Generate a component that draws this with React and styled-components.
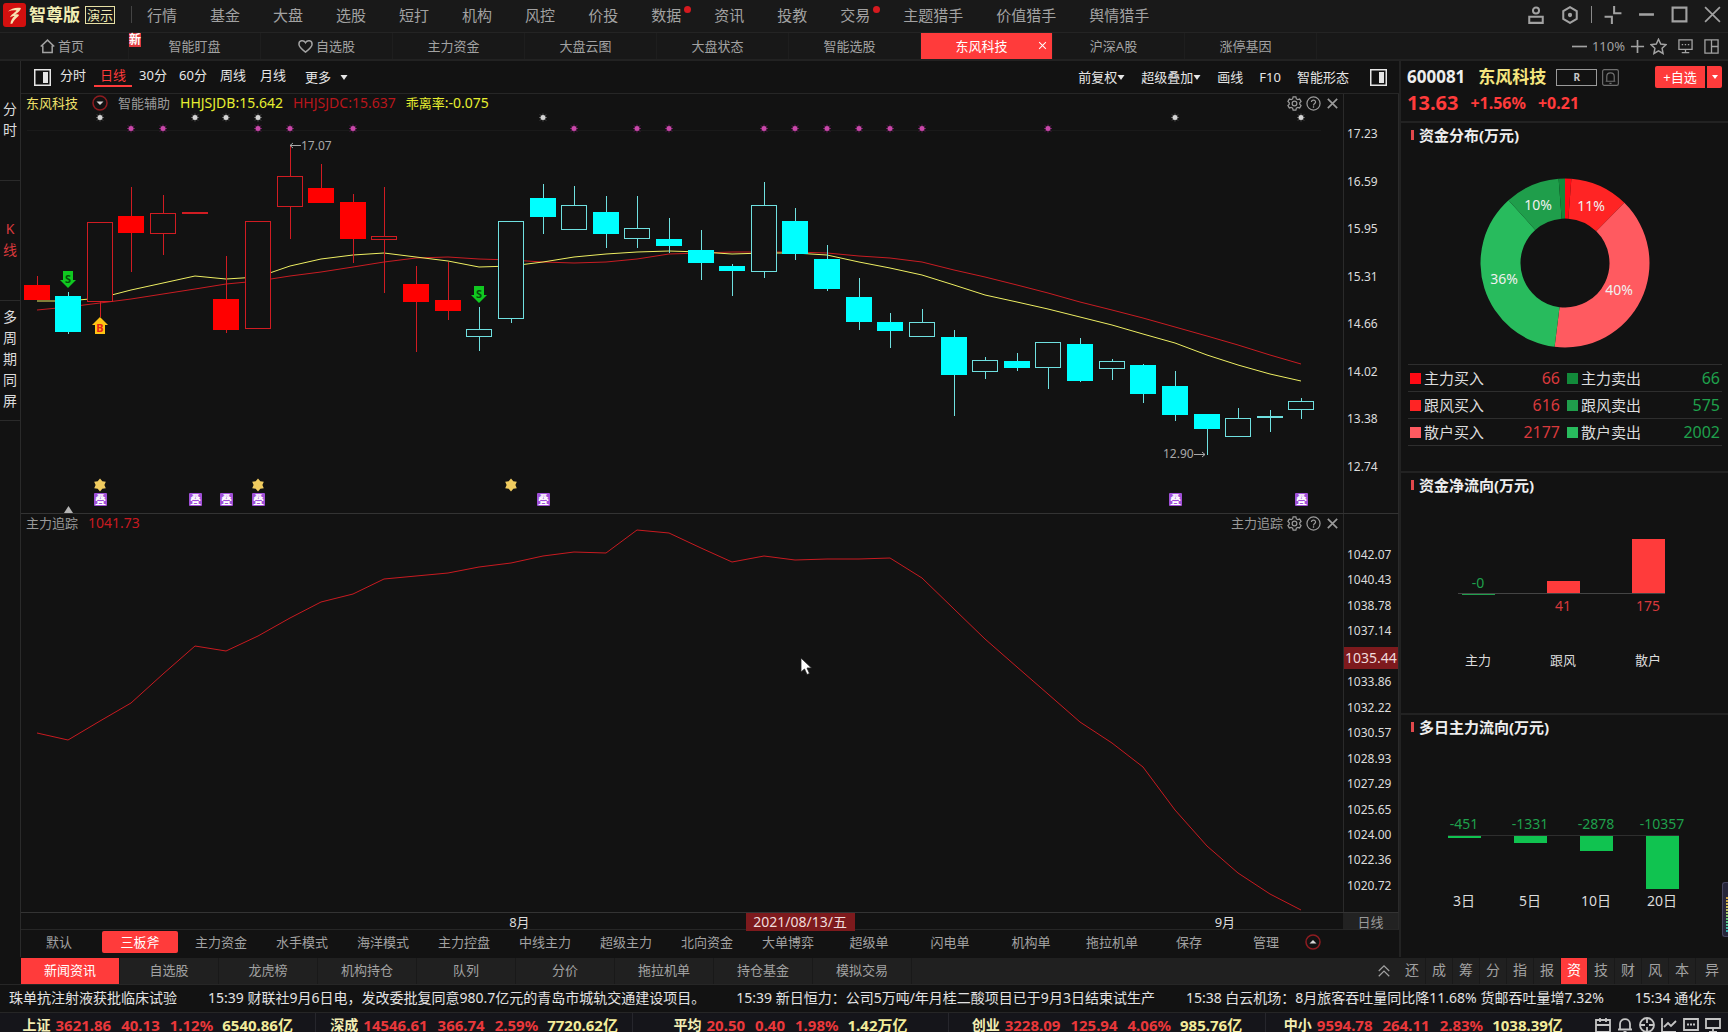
import React from 'react';
import styled, { createGlobalStyle, css } from 'styled-components'

/*
	:::: Data ::::
*/
const MENU = [
	'行情', '基金', '大盘', '选股', '短打', '机构', '风控', '价投', '数据*', '资讯',
	'投教', '交易*', '主题猎手', '价值猎手', '舆情猎手',
];
const PAGES = ['首页', '智能盯盘', '自选股', '主力资金', '大盘云图', '大盘状态', '智能选股', '东风科技', '沪深A股', '涨停基因'];
const PERIODS = ['分时', '日线', '30分', '60分', '周线', '月线'];
const MODES = [
	'默认', '三板斧', '主力资金', '水手模式', '海洋模式', '主力控盘', '中线主力',
	'超级主力', '北向资金', '大单博弈', '超级单', '闪电单', '机构单', '拖拉机单',
];
const INFO_TABS = ['新闻资讯', '自选股', '龙虎榜', '机构持仓', '队列', '分价', '拖拉机单', '持仓基金', '模拟交易'];
const SHORT_TABS = ['还', '成', '筹', '分', '指', '报', '资', '技', '财', '风', '本', '异'];
const NEWS = [
	'珠单抗注射液获批临床试验',
	'15:39 财联社9月6日电，发改委批复同意980.7亿元的青岛市城轨交通建设项目。',
	'15:39 新日恒力：公司5万吨/年月桂二酸项目已于9月3日结束试生产',
	'15:38 白云机场：8月旅客吞吐量同比降11.68% 货邮吞吐量增7.32%',
	'15:34 通化东',
];
const INDEXES = [
	{ name: '上证', values: ['3621.86', '40.13', '1.12%'], amount: '6540.86亿' },
	{ name: '深成', values: ['14546.61', '366.74', '2.59%'], amount: '7720.62亿' },
	{ name: '平均', values: ['20.50', '0.40', '1.98%'], amount: '1.42万亿' },
	{ name: '创业', values: ['3228.09', '125.94', '4.06%'], amount: '985.76亿' },
	{ name: '中小', values: ['9594.78', '264.11', '2.83%'], amount: '1038.39亿' },
];
const PRICES = ['17.23', '16.59', '15.95', '15.31', '14.66', '14.02', '13.38', '12.74'];
const LEVELS = [
	'1042.07', '1040.43', '1038.78', '1037.14', '1035.44', '1033.86', '1032.22',
	'1030.57', '1028.93', '1027.29', '1025.65', '1024.00', '1022.36', '1020.72',
];

// high, body top, body bottom, low, filled
const CANDLES = [
	[164, 173, 188, 188, 1], [180, 184, 220, 222, 1], [110, 110, 190, 205, 0], [75, 104, 121, 160, 1],
	[83, 101, 122, 143, 0], [100, 100, 102, 102, 1], [144, 187, 218, 221, 1], [109, 109, 217, 217, 0],
	[33, 64, 95, 127, 0], [52, 76, 91, 91, 1], [82, 90, 127, 151, 1], [75, 124, 128, 181, 0],
	[154, 172, 190, 240, 1], [150, 188, 199, 208, 1], [195, 217, 225, 239, 0], [109, 109, 207, 211, 0],
	[72, 86, 105, 122, 1], [74, 93, 118, 118, 0], [84, 100, 122, 136, 1], [84, 116, 127, 136, 0],
	[106, 127, 134, 141, 1], [118, 138, 151, 168, 1], [152, 154, 159, 184, 1], [70, 93, 160, 166, 0],
	[96, 109, 142, 148, 1], [133, 147, 177, 179, 1], [166, 185, 210, 218, 1], [201, 210, 219, 236, 1],
	[197, 210, 225, 225, 0], [218, 225, 263, 304, 1], [245, 248, 260, 267, 0], [241, 249, 256, 259, 1],
	[230, 230, 256, 277, 0], [226, 232, 269, 270, 1], [247, 249, 257, 268, 0], [252, 253, 282, 291, 1],
	[259, 274, 303, 309, 1], [302, 302, 317, 343, 1], [296, 306, 325, 325, 0], [298, 304, 306, 320, 1],
	[286, 289, 298, 307, 0],
];
const RED_DAYS = [0, 2, 3, 4, 5, 6, 7, 8, 9, 10, 11, 12, 13];
const FAST = [
	189, 189, 186, 178, 171, 164, 167, 165, 154, 147, 143, 141, 145, 149, 155, 154, 150, 145, 142, 140, 139,
	140, 142, 141, 141, 143, 150, 156, 163, 173, 183, 190, 197, 205, 213, 222, 231, 243, 253, 262, 269,
];
const SLOW = [
	198, 195, 191, 187, 182, 177, 172, 169, 164, 160, 155, 150, 146, 145, 147, 148, 150, 151, 150, 147, 142,
	141, 140, 140, 140, 141, 144, 146, 150, 158, 165, 173, 181, 190, 198, 206, 215, 224, 233, 243, 252,
];
const TRACK = [
	201, 208, 189, 171, 142, 114, 119, 104, 86, 70, 62, 47, 44, 41, 35, 31, 24, 20, 21, -2, 1,
	16, 30, 24, 28, 27, 27, 26, 46, 77, 107, 135, 162, 190, 211, 235, 278, 314, 341, 362, 378,
];
const WHITE_DOTS = [2, 5, 6, 7, 16, 36, 40];
const PINK_DOTS = [3, 4, 7, 8, 10, 17, 19, 20, 23, 24, 25, 26, 27, 28, 32];
const GOLD_STARS = [2, 7, 15];

const FLOWS = [
	{ buy: '主力买入', buyValue: 66, buyColor: '#ff0a14', sell: '主力卖出', sellValue: 66, sellColor: '#128a3a' },
	{ buy: '跟风买入', buyValue: 616, buyColor: '#ff2424', sell: '跟风卖出', sellValue: 575, sellColor: '#1f9e4b' },
	{ buy: '散户买入', buyValue: 2177, buyColor: '#ff5a60', sell: '散户卖出', sellValue: 2002, sellColor: '#28bb5d' },
];

const xOf = i => Math.round(15.6 + 31.62 * i);
const toPoints = list => list.map((y, i) => `${xOf(i)},${y}`).join(' ');

/*
	:::: Styles ::::
*/
const GlobalStyle = createGlobalStyle`
	* {
		box-sizing: border-box;
	}

	body {
		margin: 0;
		background: #121212;
		color: #dcdcdc;
		font-family: 'Noto Sans', 'Noto Sans CJK SC', sans-serif;
		font-size: 13px;
		line-height: 16px;
	}

	button {
		margin: 0;
		padding: 0;
		border: 0;
		background: none;
		color: inherit;
		font: inherit;
		white-space: nowrap;
		cursor: pointer;
	}

	a {
		color: inherit;
		text-decoration: none;
	}

	svg {
		display: block;
		flex: none;
	}
`;

const Page = styled.div`
	display: flex;
	flex-direction: column;
	height: 100vh;
	overflow: hidden;
	white-space: nowrap;
`;

const TitleBar = styled.header`
	display: flex;
	align-items: center;
	flex: none;
	height: 33px;
	padding: 0 7px 3px 3px;
	background: #191919;
	border-bottom: 1px solid #242424;
	color: #a2a2a2;
`;

const Brand = styled.h1`
	margin: 0 5px 0 3px;
	color: #f3eeb4;
	font-size: 17px;
	font-weight: 700;
	line-height: 24px;
`;

const DemoTag = styled.span`
	padding: 0 1px;
	border: 1px solid #e6dfa4;
	color: #f3eeb4;
	font-size: 13px;
	line-height: 16px;
`;

const Divider = styled.i`
	width: 1px;
	height: 17px;
	margin: ${p => p.$margin};
	background: ${p => p.$color || '#444'};
`;

const Menu = styled.nav`
	display: flex;
	flex: 1;
	gap: 33px;
	font-size: 15px;
	line-height: 20px;
`;

const MenuLink = styled.a`
	position: relative;

	${p => p.$dot && css`
		&::after {
			content: '';
			position: absolute;
			top: 1px;
			right: -10px;
			width: 7px;
			height: 7px;
			border-radius: 50%;
			background: #d61a1f;
		}
	`}
`;

const WindowTools = styled.div`
	display: flex;
	align-items: center;
	gap: 16px;
`;

const PageTabs = styled.nav`
	display: flex;
	flex: none;
	height: 28px;
	padding-right: 9px;
	background: #181818;
	border-bottom: 2px solid #222;
	color: #a2a2a2;
`;

const PageTab = styled.a`
	position: relative;
	display: flex;
	align-items: center;
	justify-content: center;
	gap: 3px;
	width: 132px;
	padding-right: ${p => p.$closable ? 10 : 0}px;
	border-right: 1px solid #1e1e1e;
	background: ${p => p.$active ? '#ff3b3b' : 'none'};
	color: ${p => p.$active ? '#fff' : 'inherit'};

	&:first-child {
		width: 129px;
		padding-right: 4px;
	}
`;

const NewBadge = styled.span`
	position: absolute;
	top: 0;
	left: 0;
	background: #e03a3e;
	color: #fff;
	font-size: 12px;
	font-weight: 700;
	line-height: 14px;
`;

const TabClose = styled.button`
	position: absolute;
	top: 8px;
	right: 5px;
`;

const ZoomTools = styled.div`
	display: flex;
	align-items: center;
	gap: 5px;
	margin-left: auto;
`;

const Body = styled.div`
	display: flex;
	flex: 1;
	min-height: 0;
`;

const SideNav = styled.nav`
	flex: none;
	width: 21px;
	border-right: 1px solid #2a2a2a;
`;

const SideButton = styled.button`
	display: flex;
	flex-direction: column;
	align-items: center;
	justify-content: center;
	width: 20px;
	height: 120px;
	padding-bottom: 4px;
	border-bottom: 1px solid #2a2a2a;
	color: ${p => p.$active ? '#d8393c' : '#dcdcdc'};
	font-size: 14px;
	line-height: 21px;
`;

const Main = styled.main`
	display: flex;
	flex-direction: column;
	flex: 1;
	min-width: 0;
`;

const Toolbar = styled.div`
	display: flex;
	align-items: center;
	flex: none;
	height: 33px;
	padding: 0 12px 0 13px;
	border-bottom: 1px solid #262626;
	color: #e6e6e6;
`;

const Periods = styled.div`
	display: flex;
	gap: 2px;
	margin-left: 3px;
	margin-right: auto;
`;

const Period = styled.button`
	width: 38px;
	height: 20px;
	padding-bottom: 2px;
	border-bottom: 2px solid ${p => p.$active ? '#ff3b3b' : 'transparent'};
	color: ${p => p.$active ? '#ff3b3b' : 'inherit'};
`;

const ToolGroup = styled.div`
	display: flex;
	align-items: center;
	gap: 16px;
	margin-right: 21px;
`;

const ToolButton = styled.button`
	display: flex;
	align-items: center;
	gap: ${p => p.$gap || 0}px;
	margin-left: ${p => p.$left || 0}px;
`;

const Panel = styled.section`
	display: flex;
	flex: none;
	border-bottom: 1px solid #333;
	border-right: 1px solid #2a2a2a;
`;

const Plot = styled.div`
	flex: 1;
	min-width: 0;

	& > svg {
		width: 100%;
		height: auto;
		overflow: visible;
	}
`;

const PlotHeader = styled.div`
	display: flex;
	align-items: center;
	height: 18px;
	padding: 0 3px 0 5px;
	color: #9a9a9a;
`;

const Legend = styled.span`
	margin-right: 10px;
	color: ${p => p.$color || 'inherit'};
	font-size: ${p => p.$latin ? 14 : 13}px;
`;

const LegendSwitch = styled.button`
	margin: 0 10px 0 4px;
`;

const Latin = styled.span`
	font-size: 14px;
`;

const PlotTools = styled.div`
	display: flex;
	align-items: center;
	gap: 4px;
	margin-left: auto;
`;

const Axis = styled.div`
	display: flex;
	flex-direction: column;
	justify-content: space-between;
	flex: none;
	width: 55px;
	padding: ${p => p.$pad};
	border-left: 1px solid #2a2a2a;
	font-size: 12px;
`;

const Tick = styled.span`
	padding-left: 3px;

	${p => p.$current && css`
		margin: -2px 0 -4px;
		padding-left: 1px;
		background: #7d1a1d;
		color: #f0dcdc;
		font-size: 14px;
		line-height: 22px;
	`}
`;

const TimeAxis = styled.div`
	display: flex;
	flex: none;
	height: 17px;
	border-bottom: 1px solid #262626;
	border-right: 1px solid #2a2a2a;
	line-height: 18px;
`;

const TimeScale = styled.div`
	display: grid;
	grid-template-columns: 484fr 28px 212fr 109px 356fr 28px 104fr;
	flex: 1;
	text-align: center;
`;

const Month = styled.span`
	grid-column: ${p => p.$col};
`;

const CurrentDate = styled.span`
	grid-column: 4;
	background: #7d1a1d;
	color: #f0dcdc;
	font-size: 14px;
`;

const AxisUnit = styled.span`
	width: 55px;
	background: #222;
	color: #9a9a9a;
	text-align: center;
`;

const Modes = styled.div`
	display: flex;
	align-items: center;
	gap: 5px;
	flex: 1;
	padding-bottom: 3px;
	color: #a2a2a2;
`;

const Mode = styled.button`
	width: 76px;
	height: 22px;
	border-radius: 2px;
	background: ${p => p.$active ? '#ff3b3b' : 'none'};
	color: ${p => p.$active ? '#fff' : 'inherit'};
`;

const ModeActions = styled.div`
	display: flex;
	align-items: center;
	gap: 1px;
	margin-left: -4px;
`;

const Side = styled.aside`
	position: relative;
	flex: none;
	width: 329px;
	border-left: 2px solid #222;
`;

const QuoteHead = styled.div`
	height: 62px;
	padding: 0 6px;
	border-bottom: 2px solid #222;
`;

const QuoteRow = styled.div`
	display: flex;
	align-items: center;
	gap: ${p => p.$gap}px;
	height: ${p => p.$height}px;
	color: ${p => p.$color || '#eee'};
	font-size: 17px;
	font-weight: 700;
`;

const StockName = styled.h2`
	margin: 0 10px 0 13px;
	color: #f5e57e;
	font-size: 17px;
	line-height: 24px;
`;

const MarginTag = styled.span`
	width: 41px;
	margin-right: 5px;
	border: 1px solid #9a9a9a;
	color: #c8c8c8;
	font-size: 10px;
	line-height: 15px;
	text-align: center;
`;

const AddButton = styled.button`
	width: 50px;
	height: 22px;
	margin-left: auto;
	border-radius: 2px 0 0 2px;
	background: #ff3b3b;
	color: #fff;
	font-size: 13px;
	font-weight: 400;
`;

const AddMore = styled.button`
	display: flex;
	align-items: center;
	justify-content: center;
	width: 15px;
	height: 22px;
	margin-left: 2px;
	border-radius: 0 2px 2px 0;
	background: #ff3b3b;
`;

const LastPrice = styled.span`
	font-size: 20px;
`;

const Change = styled.span`
	font-size: 16px;
`;

const Block = styled.section`
	height: ${p => p.$height}px;
	padding: 0 6px 0 7px;
	border-bottom: ${p => p.$last ? 0 : 2}px solid #222;

	& > svg {
		width: 100%;
	}
`;

const BlockTitle = styled.h3`
	display: flex;
	align-items: center;
	gap: 5px;
	margin: 0 0 2px;
	padding-left: 3px;
	color: #eee;
	font-size: 15px;
	line-height: 24px;

	&::before {
		content: '';
		width: 3px;
		height: 10px;
		background: #e0484c;
	}
`;

const FlowTable = styled.table`
	width: 100%;
	border-collapse: collapse;
	border-top: 1px solid #2e2e2e;
	font-size: 15px;
	table-layout: fixed;

	td {
		height: 27px;
		padding: 0 2px;
		border-bottom: 1px solid #2e2e2e;
	}
`;

const FlowLabel = styled.span`
	display: flex;
	align-items: center;
	gap: 3px;

	&::before {
		content: '';
		width: 11px;
		height: 11px;
		background: ${p => p.$color};
	}
`;

const Amount = styled.td`
	color: ${p => p.$up ? '#d8393c' : '#1fa04c'};
	font-size: 16px;
	text-align: right;

	&:nth-child(2) {
		padding-right: 5px;
	}
`;

const VolumeStrip = styled.div`
	position: absolute;
	right: 0;
	bottom: 20px;
	width: 6px;
	height: 55px;
	padding: 14px 0 4px 3px;
	border: 1px solid #45455e;
	border-right: 0;
	border-radius: 3px 0 0 3px;
	background: #26263a;

	&::after {
		content: '';
		display: block;
		height: 100%;
		background:
			repeating-linear-gradient(transparent 0 2px, #26263a 2px 3px),
			linear-gradient(#c99a3c, #c9c05a, #5cc47a, #3ab0b8);
	}
`;

const InfoBar = styled.div`
	display: flex;
	flex: none;
	height: 28px;
	padding-left: 21px;
	border-top: 1px solid #121212;
	border-bottom: 1px solid #262626;
	color: #a2a2a2;
`;

const InfoTabs = styled.div`
	display: flex;
	align-items: center;
	flex: 1;
	background: #202020;
`;

const InfoTab = styled.button`
	width: 99px;
	height: 26px;
	padding-bottom: 2px;
	border-right: 1px solid #191919;
	background: ${p => p.$active ? '#ff3b3b' : 'none'};
	color: ${p => p.$active ? '#fff' : 'inherit'};
`;

const MoreButton = styled.button`
	margin: 0 8px 0 auto;
`;

const ShortTabs = styled.div`
	display: flex;
	width: 329px;
	background: #202020;
	font-size: 14px;
`;

const ShortTab = styled.button`
	width: 27px;
	padding-bottom: 2px;
	border-right: 1px solid #191919;
	background: ${p => p.$active ? '#ff3b3b' : 'none'};
	color: ${p => p.$active ? '#fff' : 'inherit'};

	&:last-child {
		flex: 1;
		border-right: 0;
	}
`;

const NewsBar = styled.div`
	display: flex;
	align-items: center;
	gap: 31px;
	flex: none;
	height: 28px;
	padding: 0 0 2px 9px;
	border-bottom: 1px solid #262626;
	overflow: hidden;
	color: #e2e2e2;
	font-size: 14px;
`;

const StatusBar = styled.footer`
	display: flex;
	flex: none;
	height: 19px;
	padding-right: 7px;
	background: #15151a;
`;

const IndexItem = styled.div`
	display: flex;
	justify-content: center;
	gap: 10px;
	flex: 1;
	padding-top: 5px;
	border-right: 1px solid #26262c;
	color: #ea383b;
	font-size: 15px;
	font-weight: 700;
	line-height: 14px;

	&:last-of-type {
		border-right: 0;
	}
`;

const IndexName = styled.span`
	margin-right: -5px;
	color: #f3eeb4;
	font-size: 14px;
`;

const IndexAmount = styled.span`
	margin-left: -1px;
	color: #f3ec9a;
`;

const StatusIcons = styled.span`
	display: flex;
	gap: 6px;
	padding: 4px 0 0 14px;
	color: #c4c4c4;
`;

/*
	:::: Icons ::::
*/
const Icon = ({ d, size = 16, width = 1.4, color = 'currentColor', children }) => (
	<svg width={size} height={size} viewBox="0 0 16 16" fill="none" stroke={color} strokeWidth={width} aria-hidden="true">
		{d && <path d={d} />}
		{children}
	</svg>
);

const Caret = () => (
	<svg width="8" height="5" viewBox="0 0 8 5" fill="currentColor" aria-hidden="true"><path d="M0.5 0h7L4 5z" /></svg>
);

const Logo = () => (
	<svg width="23" height="24" viewBox="0 0 23 24" aria-hidden="true">
		<rect width="23" height="24" rx="3" fill="#d3100f" />
		<path d="M5 8.5C8 5.500 13 4 18 5c-.5 3-3.500 5-6 6.500 2-.5 3.500-.5 4 .5-1 2.500-5 4-6.500 8.500L7.500 21c0-3.500 2-6 4-8-1.500 0-3.500.5-4.500 1.500.5-2.500 4.500-4.500 6.500-7C10.500 7 8 7.500 5 8.500z" fill="#f7e2b0" />
	</svg>
);

const LayoutIcon = () => (
	<svg width="17" height="17" viewBox="0 0 17 17" fill="none" aria-hidden="true">
		<rect x=".75" y=".75" width="15.500" height="15.500" stroke="#e6e6e6" strokeWidth="1.500" />
		<rect x="9" y="3" width="5" height="11" fill="#e6e6e6" />
	</svg>
);

const RoundArrow = ({ up }) => (
	<svg width="16" height="16" viewBox="0 0 16 16" fill="none" aria-hidden="true">
		<circle cx="8" cy="8" r="7" stroke="#8e1c20" strokeWidth="1.500" />
		<path d={up ? 'M4.500 9.500h7L8 6z' : 'M4.500 6.500h7L8 10z'} fill="#d8d8d8" />
	</svg>
);

const HEX = 'M8 1l6 3.500v7L8 15l-6-3.500v-7z';

const PanelTools = () => (
	<>
		<ToolButton aria-label="设置">
			<Icon size={15} width={1.3} d="M6.500 1h3l.5 2 1.500.9 2-.6 1.500 2.500L13.600 7.200v1.600L15 10.200l-1.500 2.500-2-.6-1.500.9-.5 2h-3L6 13l-1.500-.9-2 .6L1 10.200l1.400-1.400V7.200L1 5.800l1.500-2.500 2 .6L6 3z">
				<circle cx="8" cy="8" r="2.500" />
			</Icon>
		</ToolButton>
		<ToolButton aria-label="帮助">
			<Icon size={15} width={1.3} d="M5.800 6.500c0-3 4.600-2.800 4.400 0C10.100 8 8 8 8 10M8 11v1.500"><circle cx="8" cy="8" r="7" /></Icon>
		</ToolButton>
		<ToolButton aria-label="关闭"><Icon size={15} width={1.8} d="M3 3l10 10M13 3L3 13" /></ToolButton>
	</>
);

/*
	:::: Charts ::::
*/
const Candle = ({ data, i }) => {
	const [high, top, bottom, low, filled] = data;
	const x = xOf(i);
	const up = RED_DAYS.includes(i);
	const color = up ? '#ff0000' : '#00ffff';
	const line = up ? '#d01c22' : '#6fe0e0';

	return (
		<g shapeRendering="crispEdges">
			<path d={`M${x + .5} ${high}V${top}M${x + .5} ${bottom}V${low}`} stroke={line} />
			{filled
				? <rect x={x - 13} y={top} width="26" height={bottom - top} fill={bottom - top < 3 ? line : color} />
				: <rect x={x - 12.5} y={top + .5} width="25" height={bottom - top - 1} fill="#121212" stroke={line} />}
		</g>
	);
};

const Signal = ({ i, y, buy }) => (
	<g transform={`translate(${xOf(i) - 8} ${y})`}>
		<path d={buy ? 'M8 0l8 8h-3v9H3V8H0z' : 'M3 0h10v9h3l-8 8-8-8h3z'} fill={buy ? '#ffc414' : '#10c820'} />
		<text x="8" y={buy ? 15 : 12} textAnchor="middle" fontSize="11" fontWeight="700" fill={buy ? '#e8201a' : '#044d0a'}>
			{buy ? 'B' : 'S'}
		</text>
	</g>
);

const Spark = ({ x, y, color, glow }) => (
	<g>
		<path d={`M${x} ${y - 4}V${y + 4}M${x - 4} ${y}H${x + 4}M${x - 3} ${y - 3}l6 6M${x + 3} ${y - 3}l-6 6`} stroke={glow} />
		<circle cx={x} cy={y} r="2.500" fill={color} />
	</g>
);

const PriceChart = () => (
	<svg viewBox="0 0 1322 401" preserveAspectRatio="xMinYMin meet" role="img" aria-label="日线K线图">
		<path d="M6 18.500H1300" stroke="#1a1a1a" />
		{WHITE_DOTS.map(i => <Spark key={i} x={xOf(i)} y={5.5} color="#d4d4d4" glow="#5a5a5a" />)}
		{PINK_DOTS.map(i => <Spark key={i} x={xOf(i)} y={16.5} color="#c848a8" glow="#6e1c60" />)}
		<polyline points={toPoints(SLOW)} fill="none" stroke="#c81c22" />
		<polyline points={toPoints(FAST)} fill="none" stroke="#eeee62" />
		{CANDLES.map((c, i) => <Candle key={i} data={c} i={i} />)}
		<Signal i={1} y={159} />
		<Signal i={14} y={174} />
		<Signal i={2} y={205} buy />
		<g fill="#a8a8a8" fontSize="12">
			<path d="M269 33.500h11M272 31l-3 2.500 3 2.500" stroke="#a8a8a8" fill="none" />
			<text x="280" y="38">17.07</text>
			<text x="1142" y="346">12.90</text>
			<path d="M1173 342.500h11M1181 340l3 2.500-3 2.500" stroke="#a8a8a8" fill="none" />
		</g>
		{GOLD_STARS.map(i => (
			<path key={i} transform={`translate(${xOf(i)} 373)`} fill="#f0cc60"
				d="M0-6.500L2.300-3.800 5.800-3.300 4.400 0 5.800 3.300 2.300 3.800 0 6.500-2.300 3.800-5.800 3.300-4.400 0-5.800-3.300-2.300-3.800z" />
		))}
		{WHITE_DOTS.map(i => (
			<g key={i}>
				<rect x={xOf(i) - 6} y="381" width="13" height="13" rx="1" fill="#a050d8" />
				<text x={xOf(i) + .5} y="392" textAnchor="middle" fontSize="11" fontWeight="700" fill="#fff">叠</text>
			</g>
		))}
		<path d="M43 401l4.500-7 4.500 7z" fill="#b4b4b4" />
	</svg>
);

const TrackChart = () => (
	<svg viewBox="0 0 1322 380" preserveAspectRatio="xMinYMin meet" role="img" aria-label="主力追踪">
		<polyline points={toPoints(TRACK)} fill="none" stroke="#c81a20" />
		<path d="M780 126v14l3.500-3 2.500 5.500 2.500-1-2.500-5.500h4.500z" fill="#fff" stroke="#222" strokeWidth=".8" />
	</svg>
);

const arc = (from, to) => {
	const at = (a, r) => {
		const t = a * Math.PI * 2;
		return `${157 + r * Math.sin(t)} ${114 - r * Math.cos(t)}`;
	};
	const large = to - from > .5 ? 1 : 0;
	return `M${at(from, 84.5)}A84.5 84.5 0 ${large} 1 ${at(to, 84.5)}L${at(to, 44.5)}A44.5 44.5 0 ${large} 0 ${at(from, 44.5)}Z`;
};

const Donut = () => {
	const parts = [
		...FLOWS.map(f => [f.buyValue, f.buyColor]),
		...FLOWS.map(f => [f.sellValue, f.sellColor]).reverse(),
	];
	const total = parts.reduce((sum, p) => sum + p[0], 0);
	let start = 0;

	return (
		<svg height="215" viewBox="0 0 314 215" role="img" aria-label="资金分布">
			{parts.map(([value, color]) => {
				const from = start;
				start += value / total;
				return <path key={color} d={arc(from, start)} fill={color} />;
			})}
			<g fill="#f0f0f0" fontSize="14" textAnchor="middle">
				<text x="183" y="62">11%</text>
				<text x="211" y="146">40%</text>
				<text x="96" y="135">36%</text>
				<text x="130" y="61">10%</text>
			</g>
		</svg>
	);
};

const NetFlow = () => (
	<svg height="190" viewBox="0 0 314 190" role="img" aria-label="资金净流向">
		<g shapeRendering="crispEdges">
			<rect x="54" y="95" width="33" height="1" fill="#1fa04c" />
			<rect x="139" y="82" width="33" height="13" fill="#ff3b3b" />
			<rect x="224" y="40" width="33" height="55" fill="#ff3b3b" />
			<rect x="50" y="94" width="207" height="1" fill="#444" />
		</g>
		<g fontSize="14" textAnchor="middle" fill="#d8393c">
			<text x="70" y="89" fill="#1fa04c">-0</text>
			<text x="155" y="112">41</text>
			<text x="240" y="112">175</text>
		</g>
		<g fontSize="13" textAnchor="middle" fill="#dcdcdc">
			<text x="70" y="166">主力</text>
			<text x="155" y="166">跟风</text>
			<text x="240" y="166">散户</text>
		</g>
	</svg>
);

const DAYS = [['3日', '-451', 2], ['5日', '-1331', 7], ['10日', '-2878', 15], ['20日', '-10357', 53]];

const MultiDayFlow = () => (
	<svg height="190" viewBox="0 0 314 190" role="img" aria-label="多日主力流向">
		<rect x="40" y="94" width="231" height="1" fill="#2e2e2e" />
		{DAYS.map(([day, value, height], i) => (
			<g key={day} fontSize="14" textAnchor="middle">
				<text x={56 + i * 66} y="88" fill="#1fa04c">{value}</text>
				<rect x={40 + i * 66} y="95" width="33" height={height} fill="#10c350" />
				<text x={56 + i * 66} y="165" fill="#dcdcdc">{day}</text>
			</g>
		))}
	</svg>
);

const SideQuote = () => (
	<Side>
		<QuoteHead>
			<QuoteRow $height={32}>
				<span>600081</span>
				<StockName>东风科技</StockName>
				<MarginTag>R</MarginTag>
				<Icon size={17} width={1.1} color="#707070" d="M4.500 11V7c0-4.500 7-4.500 7 0v4M3.500 11.500h9M7 13.500h2">
					<rect x=".6" y=".6" width="14.800" height="14.800" rx="1.500" />
				</Icon>
				<AddButton>+自选</AddButton>
				<AddMore aria-label="更多自选"><svg width="6" height="4" viewBox="0 0 6 4" fill="#fff"><path d="M0 0h6L3 4z" /></svg></AddMore>
			</QuoteRow>
			<QuoteRow $height={20} $gap={12} $color="#ff3b3b">
				<LastPrice>13.63</LastPrice>
				<Change>+1.56%</Change>
				<Change>+0.21</Change>
			</QuoteRow>
		</QuoteHead>
		<Block $height={350}>
			<BlockTitle>资金分布(万元)</BlockTitle>
			<Donut />
			<FlowTable>
				<tbody>
					{FLOWS.map(f => (
						<tr key={f.buy}>
							<td><FlowLabel $color={f.buyColor}>{f.buy}</FlowLabel></td>
							<Amount $up>{f.buyValue}</Amount>
							<td><FlowLabel $color={f.sellColor}>{f.sell}</FlowLabel></td>
							<Amount>{f.sellValue}</Amount>
						</tr>
					))}
				</tbody>
			</FlowTable>
		</Block>
		<Block $height={242}>
			<BlockTitle>资金净流向(万元)</BlockTitle>
			<NetFlow />
		</Block>
		<Block $height={242} $last>
			<BlockTitle>多日主力流向(万元)</BlockTitle>
			<MultiDayFlow />
		</Block>
		<VolumeStrip />
	</Side>
);

const App = () => (
	<Page>
		<GlobalStyle />
		<TitleBar>
			<Logo />
			<Brand>智尊版</Brand>
			<DemoTag>演示</DemoTag>
			<Divider $margin="0 15px 0 16px" />
			<Menu>
				{MENU.map(m => <MenuLink key={m} href="#" $dot={m.endsWith('*')}>{m.replace('*', '')}</MenuLink>)}
			</Menu>
			<WindowTools>
				<ToolButton aria-label="账户"><Icon size={18} width={1.8} d="M2 9.500h12V15H2z"><circle cx="8" cy="4" r="2.700" /></Icon></ToolButton>
				<ToolButton aria-label="设置"><Icon size={18} width={1.8} d={HEX}><circle cx="8" cy="8" r="1" fill="currentColor" /></Icon></ToolButton>
				<Divider $margin="0 -4px" $color="#8a8a8a" />
				<ToolButton aria-label="还原"><Icon size={18} width={1.8} d="M9 0v6.500h6.500M.5 9.500H7V16" /></ToolButton>
				<ToolButton aria-label="最小化"><Icon size={17} width={2.4} d="M1 8h14" /></ToolButton>
				<ToolButton aria-label="最大化"><Icon size={17} width={2} d="M1.500 1.500h13v13h-13z" /></ToolButton>
				<ToolButton aria-label="关闭"><Icon size={17} width={1.6} d="M1 1l14 14M15 1L1 15" /></ToolButton>
			</WindowTools>
		</TitleBar>

		<PageTabs>
			{PAGES.map((name, i) => (
				<PageTab key={name} href="#" $active={i === 7} $closable={i > 2}>
					{i === 0 && <Icon size={15} width={1.6} d="M3 7v7.500h10V7M.8 8L8 1.200 15.200 8" />}
					{i === 1 && <NewBadge>新</NewBadge>}
					{i === 2 && <Icon size={15} width={1.6} d="M8 14C3.500 10.500 1 8.500 1 5.500 1 1.500 6 .5 8 4c2-3.500 7-2.500 7 1.500 0 3-2.500 5-7 8.500z" />}
					{name}
					{i === 7 && <TabClose aria-label="关闭"><Icon size={9} width={1.8} d="M2 2l12 12M14 2L2 14" /></TabClose>}
				</PageTab>
			))}
			<ZoomTools>
				<ToolButton aria-label="缩小"><Icon size={15} width={1.8} d="M0 8h16" /></ToolButton>
				<span>110%</span>
				<ToolButton aria-label="放大"><Icon size={15} width={1.8} d="M1 8h14M8 1v14" /></ToolButton>
				<ToolButton aria-label="收藏"><Icon size={17} d="M8 1.200l2.100 4.500 4.900.6-3.600 3.400.9 4.900L8 12.200l-4.300 2.400.9-4.900L1 6.300l4.900-.6z" /></ToolButton>
				<ToolButton $left={6} aria-label="消息"><Icon size={15} d="M1 1h14v10H1zM8 11v3.500M4 14.500h8M4 6h1.500M7.200 6h1.500M10.500 6H12" /></ToolButton>
				<ToolButton $left={6} aria-label="布局"><Icon size={15} d="M1 1h14v14H1zM8 1v14M8 8h7" /></ToolButton>
			</ZoomTools>
		</PageTabs>

		<Body>
			<SideNav>
				<SideButton><span>分</span><span>时</span></SideButton>
				<SideButton $active><span>K</span><span>线</span></SideButton>
				<SideButton>{[...'多周期同屏'].map(c => <span key={c}>{c}</span>)}</SideButton>
			</SideNav>
			<Main>
				<Toolbar>
					<ToolButton aria-label="左侧栏"><LayoutIcon /></ToolButton>
					<Periods>
						{PERIODS.map(p => <Period key={p} $active={p === '日线'}>{p}</Period>)}
						<ToolButton $gap={9} $left={11}>更多<Caret /></ToolButton>
					</Periods>
					<ToolGroup>
						<ToolButton>前复权<Caret /></ToolButton>
						<ToolButton>超级叠加<Caret /></ToolButton>
						<ToolButton>画线</ToolButton>
						<ToolButton>F10</ToolButton>
						<ToolButton>智能形态</ToolButton>
					</ToolGroup>
					<ToolButton aria-label="右侧栏"><LayoutIcon /></ToolButton>
				</Toolbar>

				<Panel>
					<Plot>
						<PlotHeader>
							<Legend $color="#efe06a">东风科技</Legend>
							<LegendSwitch aria-label="切换指标"><RoundArrow /></LegendSwitch>
							<Legend>智能辅助</Legend>
							<Legend $latin $color="#e6ee30">HHJSJDB:15.642</Legend>
							<Legend $latin $color="#b8161c">HHJSJDC:15.637</Legend>
							<Legend $color="#e6ee30">乖离率<Latin>:-0.075</Latin></Legend>
							<PlotTools><PanelTools /></PlotTools>
						</PlotHeader>
						<PriceChart />
					</Plot>
					<Axis $pad="32px 0 38px">
						{PRICES.map(p => <Tick key={p}>{p}</Tick>)}
					</Axis>
				</Panel>

				<Panel>
					<Plot>
						<PlotHeader>
							<Legend>主力追踪</Legend>
							<Legend $latin $color="#c81a20">1041.73</Legend>
							<PlotTools>主力追踪<PanelTools /></PlotTools>
						</PlotHeader>
						<TrackChart />
					</Plot>
					<Axis $pad="33px 0 18px">
						{LEVELS.map(l => <Tick key={l} $current={l === '1035.44'}>{l}</Tick>)}
					</Axis>
				</Panel>

				<TimeAxis>
					<TimeScale>
						<Month $col={2}>8月</Month>
						<CurrentDate>2021/08/13/五</CurrentDate>
						<Month $col={6}>9月</Month>
					</TimeScale>
					<AxisUnit>日线</AxisUnit>
				</TimeAxis>

				<Modes>
					{MODES.map(m => <Mode key={m} $active={m === '三板斧'}>{m}</Mode>)}
					<ModeActions>
						<Mode>保存</Mode>
						<Mode>管理</Mode>
						<ToolButton aria-label="收起"><RoundArrow up /></ToolButton>
					</ModeActions>
				</Modes>
			</Main>
			<SideQuote />
		</Body>

		<InfoBar>
			<InfoTabs>
				{INFO_TABS.map((t, i) => <InfoTab key={t} $active={i === 0}>{t}</InfoTab>)}
				<MoreButton aria-label="展开"><Icon size={14} d="M2 8l6-6 6 6M2 14l6-6 6 6" /></MoreButton>
			</InfoTabs>
			<ShortTabs>
				{SHORT_TABS.map(t => <ShortTab key={t} $active={t === '资'}>{t}</ShortTab>)}
			</ShortTabs>
		</InfoBar>

		<NewsBar>
			{NEWS.map(n => <a key={n} href="#">{n}</a>)}
		</NewsBar>

		<StatusBar>
			{INDEXES.map(x => (
				<IndexItem key={x.name}>
					<IndexName>{x.name}</IndexName>
					{x.values.map(v => <span key={v}>{v}</span>)}
					<IndexAmount>{x.amount}</IndexAmount>
				</IndexItem>
			))}
			<StatusIcons>
				<Icon width={1.8} d="M1 3h14v12H1zM1 8h14M5 1v4M11 1v4" />
				<Icon width={1.8} d="M3 12V7c0-6.500 10-6.500 10 0v5M1 12.500h14M6.500 15h3" />
				<Icon width={1.8} d="M8 1v5M8 10v5M1 8h5M10 8h5"><circle cx="8" cy="8" r="7" /></Icon>
				<Icon width={1.8} d="M1 1v14h14M3 10l4-4 3 3 5-5" />
				<Icon width={1.8} d="M1 2h14v11H1zM4 7.500h2M7 7.500h2M10 7.500h2" />
				<Icon width={1.8} d="M1 2h14v9H1zM8 11v4M4 15h8" />
			</StatusIcons>
		</StatusBar>
	</Page>
);

export default App
